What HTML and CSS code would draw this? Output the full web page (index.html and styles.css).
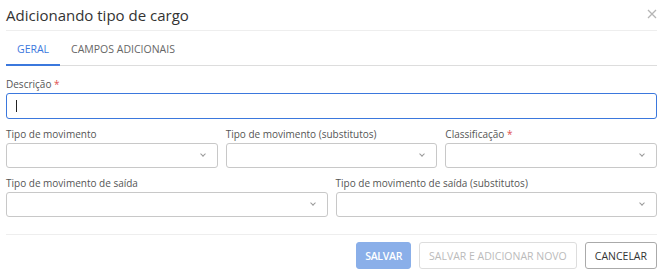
FILE: index.html
```html
<!DOCTYPE html>
<html>
  <head>
    <title>Adicionando tipo de cargo</title>
    <meta charset="UTF-8">
    <link rel="stylesheet" href="styles.css">
  </head>
  <body>
    <div class="modal">
      <div class="header">
        <h1>Adicionando tipo de cargo</h1>
        <span class="close">
          <svg width="10" height="10" viewBox="0 0 10 10"><path d="M1 1L9 9M9 1L1 9" stroke="#b5b5b5" stroke-width="1.3"/></svg>
        </span>
      </div>
      <div class="tabs">
        <div class="tab active">GERAL</div>
        <div class="tab">CAMPOS ADICIONAIS</div>
      </div>
      <form class="body">
        <div class="field">
          <label>Descrição <span class="req">*</span></label>
          <div class="input focus"><span class="caret"></span></div>
        </div>
        <div class="row three">
          <div class="field">
            <label>Tipo de movimento</label>
            <div class="input select"></div>
          </div>
          <div class="field">
            <label>Tipo de movimento (substitutos)</label>
            <div class="input select"></div>
          </div>
          <div class="field">
            <label>Classificação <span class="req">*</span></label>
            <div class="input select"></div>
          </div>
        </div>
        <div class="row two">
          <div class="field">
            <label>Tipo de movimento de saída</label>
            <div class="input select"></div>
          </div>
          <div class="field">
            <label>Tipo de movimento de saída (substitutos)</label>
            <div class="input select"></div>
          </div>
        </div>
      </form>
      <div class="footer">
        <button class="btn primary">SALVAR</button>
        <button class="btn disabled">SALVAR E ADICIONAR NOVO</button>
        <button class="btn">CANCELAR</button>
      </div>
    </div>
  </body>
</html>
```

FILE: styles.css
```css
body {
  margin: 0;
  background: #fff;
  font-family: 'Open Sans', sans-serif;
  color: #333;
}
.modal {
  padding: 0 8px 0 6px;
}
.header {
  display: flex;
  align-items: center;
  justify-content: space-between;
  height: 30px;
  border-bottom: 1px solid #eee;
}
.header h1 {
  margin: 0;
  font-size: 15px;
  font-weight: normal;
  color: #333;
}
.close {
  display: flex;
  margin-right: 0;
  margin-top: -2px;
}
.tabs {
  display: flex;
  height: 34px;
  border-bottom: 1px solid #ddd;
}
.tab {
  display: flex;
  align-items: center;
  padding: 2px 11px 0;
  font-size: 10.5px;
  color: #666;
  border-bottom: 2px solid transparent;
  margin-bottom: -1px;
}
.tab.active {
  color: #3b78dd;
  border-bottom-color: #3b78dd;
}
.body {
  padding-top: 11px;
}
.field {
  display: flex;
  flex-direction: column;
  min-width: 0;
}
.field label {
  font-size: 10px;
  color: #555;
  height: 16px;
  line-height: 14px;
}
.req {
  color: #e05050;
}
.input {
  height: 23px;
  border: 1px solid #c8c8c8;
  border-radius: 3px;
  position: relative;
}
.input.focus {
  height: 24px;
  border-color: #3b78dd;
  display: flex;
  align-items: center;
  padding-left: 9px;
  margin-bottom: 8px;
}
.caret {
  width: 1px;
  height: 12px;
  background: #222;
}
.select:after {
  content: "";
  position: absolute;
  right: 12px;
  top: 8px;
  width: 3px;
  height: 3px;
  border-right: 1px solid #999;
  border-bottom: 1px solid #999;
  transform: rotate(45deg);
}
.row {
  display: grid;
  gap: 8px;
  margin-bottom: 8px;
}
.row.three {
  grid-template-columns: 1fr 1fr 1fr;
}
.row.two {
  grid-template-columns: 1fr 1fr;
}
.footer {
  display: flex;
  justify-content: flex-end;
  gap: 8px;
  margin-top: 17px;
  padding-top: 7px;
  border-top: 1px solid #eee;
}
.btn {
  height: 27px;
  padding: 0 9px;
  font-family: inherit;
  font-size: 10.5px;
  border: 1px solid #aaa;
  border-radius: 3px;
  background: #fff;
  color: #333;
}
.btn.primary {
  background: #8aafe9;
  border-color: #8aafe9;
  color: #fff;
  font-weight: 600;
  letter-spacing: -0.3px;
  padding: 0 8px;
}
.btn.disabled {
  color: #bbb;
  border-color: #ddd;
}
```
